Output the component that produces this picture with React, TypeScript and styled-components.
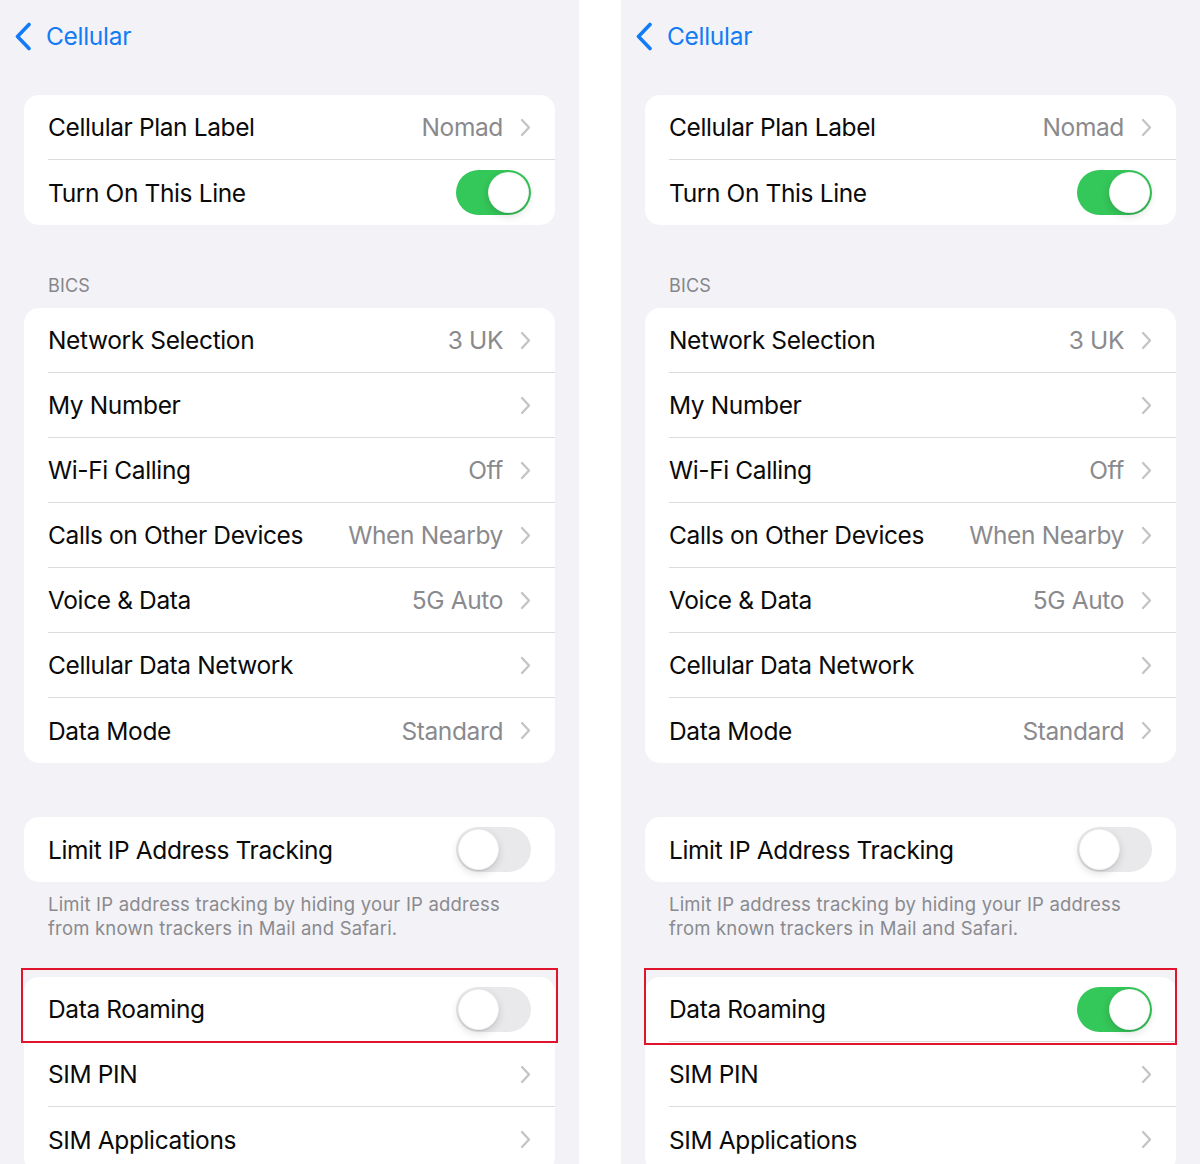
import React from "react";
import styled, { createGlobalStyle } from "styled-components";

const Global = createGlobalStyle`
  html, body { margin: 0; padding: 0; background: #ffffff; }
  body { font-family: Inter, "Noto Sans", "Liberation Sans", sans-serif; -webkit-font-smoothing: antialiased; }
  #root { width: 1200px; height: 1164px; overflow: hidden; }
`;

const Page = styled.div`
  display: flex;
  gap: 42px;
  width: 1200px;
  height: 1164px;
  background: #ffffff;
`;

const Panel = styled.div`
  width: 579px;
  height: 1164px;
  overflow: hidden;
  background: #f2f2f7;
  padding: 0 24px;
  box-sizing: border-box;
  display: flex;
  flex-direction: column;
  & > * { flex-shrink: 0; }
`;

const NavBar = styled.div`
  height: 72px;
  margin-left: -10px;
  display: flex;
  align-items: center;
  gap: 14px;
  color: #127cf6;
  font-size: 24.5px;
  letter-spacing: -0.3px;
`;

const Card = styled.div<{ $top: number }>`
  margin-top: ${(p) => p.$top}px;
  background: #ffffff;
  border-radius: 15px;
`;

const SectionHeader = styled.div`
  margin-top: 49px;
  margin-bottom: 10px;
  padding-left: 24px;
  height: 24px;
  line-height: 24px;
  font-size: 18px;
  color: #86868b;
  letter-spacing: 0.2px;
`;

const Footer = styled.div`
  margin-top: 10px;
  padding: 0 24px;
  font-size: 18.5px;
  line-height: 24px;
  color: #8a8a8e;
  letter-spacing: 0.2px;
  white-space: nowrap;
`;

const Row = styled.div`
  position: relative;
  padding-left: 24px;
`;

const RowBody = styled.div<{ $last?: boolean }>`
  height: 65px;
  box-sizing: border-box;
  display: flex;
  align-items: center;
  padding-right: 24px;
  border-bottom: ${(p) => (p.$last ? "none" : "1px solid #dcdce0")};
`;

const Label = styled.span`
  flex: 1;
  font-size: 24.5px;
  color: #0a0a0a;
  letter-spacing: -0.38px;
  white-space: nowrap;
`;

const Value = styled.span`
  font-size: 24.5px;
  color: #8a8a8e;
  letter-spacing: -0.38px;
  margin-right: 17px;
  white-space: nowrap;
`;

const Track = styled.div<{ $on: boolean }>`
  width: 75px;
  height: 45px;
  border-radius: 23px;
  box-sizing: border-box;
  padding: 2px;
  display: flex;
  justify-content: ${(p) => (p.$on ? "flex-end" : "flex-start")};
  background: ${(p) => (p.$on ? "#34c759" : "#e9e9eb")};
`;

const Knob = styled.div`
  width: 41px;
  height: 41px;
  border-radius: 50%;
  box-sizing: border-box;
  background: #ffffff;
  border: 1px solid rgba(0, 0, 0, 0.05);
  box-shadow: 0 3px 8px rgba(0, 0, 0, 0.14), 0 1px 1px rgba(0, 0, 0, 0.1);
`;

const Highlight = styled.div<{ $t: number; $b: number; $l: number; $r: number }>`
  position: absolute;
  top: ${(p) => p.$t}px;
  bottom: ${(p) => p.$b}px;
  left: ${(p) => p.$l}px;
  right: ${(p) => p.$r}px;
  border: 2px solid #e0142c;
  pointer-events: none;
`;

const Chevron = () => (
  <svg width="11" height="19" viewBox="0 0 11 19" fill="none">
    <path d="M2 2 L9 9.5 L2 17" stroke="#c4c4c7" strokeWidth="2.3" strokeLinecap="round" strokeLinejoin="round" />
  </svg>
);

const BackChevron = () => (
  <svg width="18" height="29" viewBox="0 0 18 29" fill="none">
    <path d="M15 2.5 L3.5 14.5 L15 26.5" stroke="#127cf6" strokeWidth="3.6" strokeLinecap="round" strokeLinejoin="round" />
  </svg>
);

const Toggle = ({ on }: { on: boolean }) => (
  <Track $on={on}>
    <Knob />
  </Track>
);

type Box = { t: number; b: number; l: number; r: number };

type RowProps = {
  label: string;
  value?: string;
  toggle?: boolean;
  chevron?: boolean;
  last?: boolean;
  highlight?: Box;
};

const SettingRow = ({ label, value, toggle, chevron, last, highlight }: RowProps) => (
  <Row>
    <RowBody $last={last}>
      <Label>{label}</Label>
      {value && <Value>{value}</Value>}
      {toggle !== undefined && <Toggle on={toggle} />}
      {chevron && <Chevron />}
    </RowBody>
    {highlight && <Highlight $t={highlight.t} $b={highlight.b} $l={highlight.l} $r={highlight.r} />}
  </Row>
);

const Screen = ({ roaming, hl }: { roaming: boolean; hl: Box }) => (
  <Panel>
    <NavBar>
      <BackChevron />
      <span>Cellular</span>
    </NavBar>
    <Card $top={23}>
      <SettingRow label="Cellular Plan Label" value="Nomad" chevron />
      <SettingRow label="Turn On This Line" toggle={true} last />
    </Card>
    <SectionHeader>BICS</SectionHeader>
    <Card $top={0}>
      <SettingRow label="Network Selection" value="3 UK" chevron />
      <SettingRow label="My Number" chevron />
      <SettingRow label="Wi-Fi Calling" value="Off" chevron />
      <SettingRow label="Calls on Other Devices" value="When Nearby" chevron />
      <SettingRow label="Voice & Data" value="5G Auto" chevron />
      <SettingRow label="Cellular Data Network" chevron />
      <SettingRow label="Data Mode" value="Standard" chevron last />
    </Card>
    <Card $top={54}>
      <SettingRow label="Limit IP Address Tracking" toggle={false} last />
    </Card>
    <Footer>
      Limit IP address tracking by hiding your IP address
      <br />
      from known trackers in Mail and Safari.
    </Footer>
    <Card $top={37}>
      <SettingRow label="Data Roaming" toggle={roaming} highlight={hl} />
      <SettingRow label="SIM PIN" chevron />
      <SettingRow label="SIM Applications" chevron last />
    </Card>
  </Panel>
);

export default function App() {
  return (
    <>
      <Global />
      <Page>
        <Screen roaming={false} hl={{ t: -9, b: -1, l: -3, r: -3 }} />
        <Screen roaming={true} hl={{ t: -9, b: -3, l: -1, r: -1 }} />
      </Page>
    </>
  );
}
